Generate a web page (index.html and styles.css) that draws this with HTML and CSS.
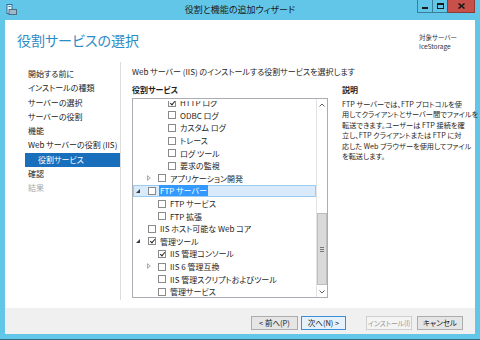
FILE: index.html
```html
<!DOCTYPE html>
<html lang="ja">
<head>
<meta charset="utf-8">
<link rel="stylesheet" href="styles.css">
</head>
<body>
<div class="window">
  <div class="titlebar">
    <svg class="appicon" width="11" height="11" viewBox="0 0 11 11">
      <rect x="1" y="0.5" width="5" height="9" fill="#e8f4fb" stroke="#2f6f9f" stroke-width="1"/>
      <rect x="3" y="5.5" width="7.5" height="5" fill="#9fb8c8" stroke="#4d6f86" stroke-width="1"/>
      <line x1="2.5" y1="2.5" x2="4.5" y2="2.5" stroke="#2f6f9f"/>
    </svg>
    <div class="title">役割と機能の追加ウィザード</div>
    <div class="caption-btns">
      <div class="cbtn"><span class="min-glyph"></span></div>
      <div class="cbtn"><span class="max-glyph"></span></div>
      <div class="cbtn close"><svg width="7" height="6" viewBox="0 0 7 6"><path d="M0.5 0.5 L6.5 5.5 M6.5 0.5 L0.5 5.5" stroke="#1a1a1a" stroke-width="1.6"/></svg></div>
    </div>
  </div>
  <div class="client">
    <div class="header">
      <h1 class="page-title">役割サービスの選択</h1>
      <div class="target">対象サーバー<br>IceStorage</div>
    </div>
    <div class="main">
      <nav class="nav">
        <div class="nav-item">開始する前に</div>
        <div class="nav-item">インストールの種類</div>
        <div class="nav-item">サーバーの選択</div>
        <div class="nav-item">サーバーの役割</div>
        <div class="nav-item">機能</div>
        <div class="nav-item">Web サーバーの役割 (IIS)</div>
        <div class="nav-item sub active">役割サービス</div>
        <div class="nav-item">確認</div>
        <div class="nav-item disabled">結果</div>
      </nav>
      <section class="content">
        <p class="intro">Web サーバー (IIS) のインストールする役割サービスを選択します</p>
        <div class="columns">
          <div class="left-col">
            <div class="label">役割サービス</div>
            <div class="treebox">
              <div class="tree">
                <div class="row l3"><span class="exp"></span><span class="cb checked"></span><span class="txt">HTTP ログ</span></div>
                <div class="row l3"><span class="exp"></span><span class="cb"></span><span class="txt">ODBC ログ</span></div>
                <div class="row l3"><span class="exp"></span><span class="cb"></span><span class="txt">カスタム ログ</span></div>
                <div class="row l3"><span class="exp"></span><span class="cb"></span><span class="txt">トレース</span></div>
                <div class="row l3"><span class="exp"></span><span class="cb"></span><span class="txt">ログ ツール</span></div>
                <div class="row l3"><span class="exp"></span><span class="cb"></span><span class="txt">要求の監視</span></div>
                <div class="row l2"><span class="exp collapsed"></span><span class="cb"></span><span class="txt">アプリケーション開発</span></div>
                <div class="row l1 selected"><span class="exp expanded"></span><span class="cb"></span><span class="txt sel">FTP サーバー</span></div>
                <div class="row l2"><span class="exp"></span><span class="cb"></span><span class="txt">FTP サービス</span></div>
                <div class="row l2"><span class="exp"></span><span class="cb"></span><span class="txt">FTP 拡張</span></div>
                <div class="row l1"><span class="exp"></span><span class="cb"></span><span class="txt">IIS ホスト可能な Web コア</span></div>
                <div class="row l1"><span class="exp expanded"></span><span class="cb checked"></span><span class="txt">管理ツール</span></div>
                <div class="row l2"><span class="exp"></span><span class="cb checked"></span><span class="txt">IIS 管理コンソール</span></div>
                <div class="row l2"><span class="exp collapsed"></span><span class="cb"></span><span class="txt">IIS 6 管理互換</span></div>
                <div class="row l2"><span class="exp"></span><span class="cb"></span><span class="txt">IIS 管理スクリプトおよびツール</span></div>
                <div class="row l2"><span class="exp"></span><span class="cb"></span><span class="txt">管理サービス</span></div>
              </div>
              <div class="vscroll">
                <div class="arrow up"><svg width="6" height="4" viewBox="0 0 6 4"><path d="M0.5 3.5 L3 1 L5.5 3.5" fill="none" stroke="#606060" stroke-width="1"/></svg></div>
                <div class="track"><div class="thumb"><span class="grip"></span></div></div>
                <div class="arrow down"><svg width="6" height="4" viewBox="0 0 6 4"><path d="M0.5 0.5 L3 3 L5.5 0.5" fill="none" stroke="#606060" stroke-width="1"/></svg></div>
              </div>
            </div>
          </div>
          <div class="right-col">
            <div class="label">説明</div>
            <p class="desc">FTP サーバーでは、FTP プロトコルを使<br>用してクライアントとサーバー間でファイルを<br>転送できます。ユーザーは FTP 接続を確<br>立し、FTP クライアントまたは FTP に対<br>応した Web ブラウザーを使用してファイル<br>を転送します。</p>
          </div>
        </div>
      </section>
    </div>
    <div class="footer">
      <button class="btn b-prev">&lt; 前へ(P)</button>
      <button class="btn b-next default">次へ(N) &gt;</button>
      <button class="btn b-install" disabled>インストール(I)</button>
      <button class="btn b-cancel">キャンセル</button>
    </div>
  </div>
</div>
</body>
</html>
```

FILE: styles.css
```css
* { box-sizing: border-box; }
html, body { margin: 0; padding: 0; }
body {
  width: 480px;
  height: 340px;
  overflow: hidden;
  font-family: "Noto Sans CJK JP", "Noto Sans", sans-serif;
  font-feature-settings: "palt";
  color: #1e1e1e;
}
.window {
  width: 480px;
  height: 340px;
  background: #62c6e8;
  border-bottom: 1px solid #2f6b80;
  display: flex;
  flex-direction: column;
}
.titlebar {
  height: 20px;
  flex: none;
  position: relative;
  display: flex;
  align-items: center;
}
.appicon { position: absolute; left: 6px; top: 4px; }
.title {
  flex: 1;
  text-align: center;
  font-size: 9px;
  line-height: 20px;
  color: #1a1a1a;
}
.caption-btns {
  position: absolute;
  right: 5px;
  top: 0;
  display: flex;
  height: 13px;
}
.cbtn {
  width: 16px;
  height: 13px;
  border: 1px solid #3a7f98;
  border-top: none;
  margin-left: -1px;
  display: flex;
  align-items: center;
  justify-content: center;
  background: #62c6e8;
}
.cbtn.close { width: 28px; background: #c7504b; border-color: #8e3a36; }
.min-glyph { width: 6px; height: 2px; background: #1a1a1a; margin-top: 4px; }
.max-glyph { width: 7px; height: 6px; border: 1px solid #1a1a1a; border-top-width: 2px; }
.client {
  flex: 1;
  margin: 0 5px 5px 5px;
  background: #fff;
  display: flex;
  flex-direction: column;
}
.header {
  height: 42px;
  flex: none;
  display: flex;
  justify-content: space-between;
  padding: 11px 18px 0 12px;
}
.page-title {
  margin: 0;
  font-weight: normal;
  font-size: 14px;
  line-height: 18px;
  color: #2b8bc6;
}
.target {
  font-size: 6.5px;
  line-height: 9px;
  color: #333;
  padding-top: 2px;
}
.main {
  flex: 1;
  display: flex;
}
.nav {
  width: 116px;
  flex: none;
  border-right: 1px solid #dcdcdc;
  padding-top: 5px;
  margin-bottom: 8px;
  font-size: 8px;
}
.nav-item {
  height: 14.3px;
  line-height: 14.3px;
  padding-left: 23px;
  white-space: nowrap;
  color: #222;
}
.nav-item.sub { padding-left: 13px; margin-left: 20px; }
.nav-item.active { background: #1a6fbd; color: #fff; }
.nav-item.disabled { color: #a8a8a8; }
.content {
  flex: 1;
  padding: 3px 0 0 11px;
}
.intro {
  margin: 0;
  font-size: 8px;
  line-height: 14px;
}
.columns {
  display: flex;
  gap: 14px;
}
.left-col { width: 196px; flex: none; }
.label {
  font-size: 8px;
  font-weight: bold;
  line-height: 12px;
  margin-top: 5px;
  height: 14px;
}
.treebox {
  height: 200px;
  border: 1px solid #aaadb2;
  display: flex;
  overflow: hidden;
}
.tree {
  flex: 1;
  overflow: hidden;
  margin-top: 2px;
}
.tree .row:first-child { margin-top: -4.5px; }
.row {
  height: 12.6px;
  display: flex;
  align-items: center;
  font-size: 8px;
  white-space: nowrap;
  border: 1px solid transparent;
}
.row.l1 { padding-left: 1px; }
.row.l2 { padding-left: 11px; }
.row.l3 { padding-left: 21px; }
.row.selected { background: #d9ebfa; border-color: #9dcbf0; }
.exp { width: 13px; height: 8px; flex: none; position: relative; }
.exp.expanded::before {
  content: "";
  position: absolute;
  left: 1px;
  top: 2px;
  width: 0; height: 0;
  border-left: 4px solid transparent;
  border-bottom: 4px solid #3b3b3b;
}
.exp.collapsed::before {
  content: "";
  position: absolute;
  left: 2px;
  top: 0.5px;
  width: 0; height: 0;
  border-top: 3.5px solid transparent;
  border-bottom: 3.5px solid transparent;
  border-left: 4px solid #a9a9a9;
}
.exp.collapsed::after {
  content: "";
  position: absolute;
  left: 2.8px;
  top: 2.2px;
  width: 0; height: 0;
  border-top: 1.8px solid transparent;
  border-bottom: 1.8px solid transparent;
  border-left: 2px solid #fff;
}
.cb {
  width: 8px;
  height: 8px;
  flex: none;
  border: 1px solid #8a8a8a;
  background: #fff;
  margin-right: 3px;
  position: relative;
}
.cb.checked::after {
  content: "";
  position: absolute;
  left: 1.5px;
  top: 0px;
  width: 2px;
  height: 4px;
  border-right: 1.4px solid #2a2a2a;
  border-bottom: 1.4px solid #2a2a2a;
  transform: rotate(40deg);
}
.txt { line-height: 11px; padding: 0 1px; }
.txt.sel { background: #3399ff; color: #fff; }
.vscroll {
  width: 11px;
  flex: none;
  border-left: 1px solid #e3e3e3;
  display: flex;
  flex-direction: column;
  background: #fff;
}
.arrow {
  height: 11px;
  display: flex;
  align-items: center;
  justify-content: center;
}
.track { flex: 1; position: relative; }
.thumb {
  position: absolute;
  left: 0;
  right: 0;
  top: 103px;
  height: 72px;
  background: #dadada;
  border: 1px solid #bdbdbd;
  display: flex;
  align-items: center;
  justify-content: center;
}
.grip {
  width: 4px;
  height: 5px;
  border-top: 1px solid #777;
  border-bottom: 1px solid #777;
  position: relative;
}
.grip::after {
  content: "";
  position: absolute;
  left: 0; right: 0; top: 1px;
  border-top: 1px solid #777;
}
.right-col { flex: 1; min-width: 0; }
.desc {
  margin: 1px 0 0 0;
  font-size: 7.2px;
  line-height: 10.4px;
  white-space: nowrap;
}
.footer {
  height: 26px;
  flex: none;
  background: #f0f0f0;
  display: flex;
  justify-content: flex-end;
  align-items: flex-start;
  padding: 8px 12px 0 0;
}
.btn {
  height: 14px;
  font-family: inherit;
  font-feature-settings: "palt";
  font-size: 7.5px;
  padding: 0;
  background: #e5e5e5;
  border: 1px solid #acacac;
  color: #1a1a1a;
  line-height: 12px;
  white-space: nowrap;
  overflow: hidden;
}
.b-prev { width: 47px; }
.b-next { width: 45px; margin-left: 3px; border-color: #3c8fd6; background: #e5f1fb; }
.b-install { width: 46px; margin-left: 20px; color: #9a9a9a; background: #f4f4f4; border-color: #cfcfcf; font-size: 7px; letter-spacing: -0.2px; }
.b-cancel { width: 46px; margin-left: 5px; }
```
